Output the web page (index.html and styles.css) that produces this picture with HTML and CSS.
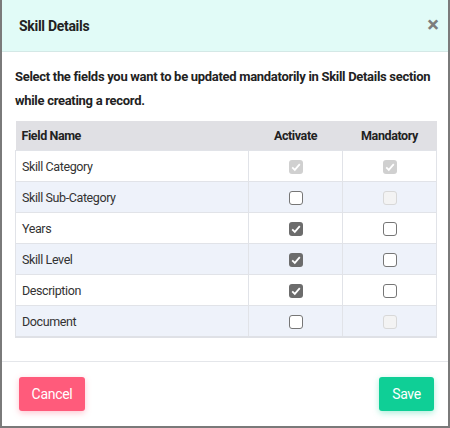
FILE: index.html
```html
<!DOCTYPE html>
<html lang="en">
<head>
    <meta charset="UTF-8">
    <meta name="viewport" content="width=device-width, initial-scale=1.0">
    <title>Skill Details</title>
    <link rel="stylesheet" href="styles.css">
</head>
<body>
    <div class="modal">
        <div class="modal-header">
            <span class="modal-title">Skill Details</span>
            <span class="close">&times;</span>
        </div>

        <div class="modal-body">
            <p class="intro">Select the fields you want to be updated mandatorily in Skill Details section while creating a record.</p>

            <table class="fields">
                <thead>
                    <tr>
                        <th class="col-name">Field Name</th>
                        <th class="col-check">Activate</th>
                        <th class="col-check">Mandatory</th>
                    </tr>
                </thead>
                <tbody>
                    <tr>
                        <td>Skill Category</td>
                        <td class="cell-check"><span class="cb checked disabled"><svg viewBox="0 0 14 14"><path d="M3.2 7.4 L5.8 9.9 L10.8 4.2"/></svg></span></td>
                        <td class="cell-check"><span class="cb checked disabled"><svg viewBox="0 0 14 14"><path d="M3.2 7.4 L5.8 9.9 L10.8 4.2"/></svg></span></td>
                    </tr>
                    <tr>
                        <td>Skill Sub-Category</td>
                        <td class="cell-check"><span class="cb"></span></td>
                        <td class="cell-check"><span class="cb disabled"></span></td>
                    </tr>
                    <tr>
                        <td>Years</td>
                        <td class="cell-check"><span class="cb checked"><svg viewBox="0 0 14 14"><path d="M3.2 7.4 L5.8 9.9 L10.8 4.2"/></svg></span></td>
                        <td class="cell-check"><span class="cb"></span></td>
                    </tr>
                    <tr>
                        <td>Skill Level</td>
                        <td class="cell-check"><span class="cb checked"><svg viewBox="0 0 14 14"><path d="M3.2 7.4 L5.8 9.9 L10.8 4.2"/></svg></span></td>
                        <td class="cell-check"><span class="cb"></span></td>
                    </tr>
                    <tr>
                        <td>Description</td>
                        <td class="cell-check"><span class="cb checked"><svg viewBox="0 0 14 14"><path d="M3.2 7.4 L5.8 9.9 L10.8 4.2"/></svg></span></td>
                        <td class="cell-check"><span class="cb"></span></td>
                    </tr>
                    <tr>
                        <td>Document</td>
                        <td class="cell-check"><span class="cb"></span></td>
                        <td class="cell-check"><span class="cb disabled"></span></td>
                    </tr>
                </tbody>
            </table>
        </div>

        <div class="modal-footer">
            <button class="btn btn-cancel">Cancel</button>
            <button class="btn btn-save">Save</button>
        </div>
    </div>
</body>
</html>
```

FILE: styles.css
```css
body {
    margin: 0;
    font-family: Roboto, "Liberation Sans", Arial, sans-serif;
    background-color: #ffffff;
}

.modal {
    box-sizing: border-box;
    width: 450px;
    height: 428px;
    display: flex;
    flex-direction: column;
    border: 2px solid #7a7a7a;
    border-top: none;
    background-color: #ffffff;
}

.modal-header {
    box-sizing: border-box;
    height: 52px;
    display: flex;
    align-items: center;
    justify-content: space-between;
    padding: 0 9px 0 17px;
    background-color: #e1fbf7;
    border-bottom: 1px solid #d4e8e6;
}

.modal-title {
    font-size: 14px;
    font-weight: bold;
    letter-spacing: -0.3px;
    color: #222222;
}

.close {
    font-size: 22px;
    font-weight: bold;
    color: #7d7d7d;
    line-height: 1;
    margin-top: -2px;
}

.modal-body {
    flex: 1;
    padding: 13px 11px 0 13px;
}

.intro {
    margin: 0 0 8px 0;
    font-size: 13px;
    font-weight: bold;
    letter-spacing: -0.3px;
    line-height: 24px;
    color: #222222;
}

.fields {
    width: 422px;
    border-collapse: collapse;
    font-size: 12.5px;
    letter-spacing: -0.4px;
    color: #333333;
}

.fields th {
    height: 29px;
    background-color: #e0e0e4;
    text-align: left;
    font-weight: bold;
    color: #222222;
    padding: 0 6px;
}

.fields th.col-check {
    text-align: center;
}

.col-name {
    width: 221px;
}

.col-check {
    width: 82px;
}

.fields td {
    height: 30px;
    padding: 0 6px;
    border: 1px solid #e1e3e8;
}

.fields tbody tr:nth-child(even) td {
    background-color: #eef2fa;
}

.fields tbody tr:last-child td {
    border-bottom: 2px solid #dfe1e6;
}

.cell-check {
    text-align: center;
}

.cb {
    box-sizing: border-box;
    display: inline-block;
    width: 14px;
    height: 14px;
    border: 1px solid #767676;
    border-radius: 3px;
    background-color: #ffffff;
    vertical-align: middle;
}

.cb.disabled {
    border-color: #d8d8d8;
    background-color: #f3f3f3;
}

.cb.checked {
    border: none;
    background-color: #6c6c6c;
}

.cb.checked.disabled {
    background-color: #d0d0d0;
}

.cb svg {
    display: block;
    width: 14px;
    height: 14px;
    fill: none;
    stroke: #ffffff;
    stroke-width: 1.8;
}

.modal-footer {
    box-sizing: border-box;
    height: 65px;
    display: flex;
    justify-content: space-between;
    align-items: flex-start;
    padding: 15px 14px 0 17px;
    border-top: 1px solid #e4e6ea;
}

.btn {
    height: 34px;
    border: none;
    border-radius: 3px;
    font-family: Roboto, "Liberation Sans", Arial, sans-serif;
    font-size: 14px;
    letter-spacing: -0.3px;
    color: #ffffff;
    padding: 0 12px;
}

.btn-cancel {
    width: 66px;
    background-color: #ff5b7b;
    box-shadow: 0 2px 6px rgba(255, 91, 123, 0.35);
}

.btn-save {
    width: 55px;
    background-color: #0fcf96;
    box-shadow: 0 2px 6px rgba(15, 207, 150, 0.35);
}
```
